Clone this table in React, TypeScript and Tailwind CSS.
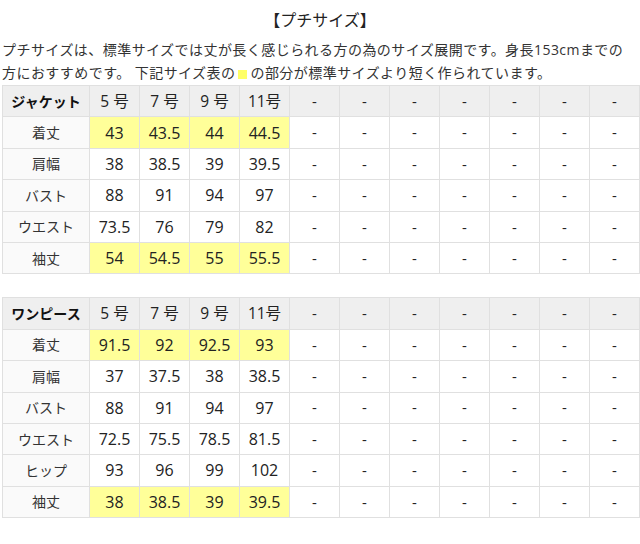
import React from "react";

const font = { fontFamily: '"Open Sans", "Noto Sans CJK JP", "Noto Sans", sans-serif' };

type Row = { label: string; vals: string[]; hl?: boolean };

const jacket: Row[] = [
  { label: "着丈", vals: ["43", "43.5", "44", "44.5"], hl: true },
  { label: "肩幅", vals: ["38", "38.5", "39", "39.5"] },
  { label: "バスト", vals: ["88", "91", "94", "97"] },
  { label: "ウエスト", vals: ["73.5", "76", "79", "82"] },
  { label: "袖丈", vals: ["54", "54.5", "55", "55.5"], hl: true },
];

const onepiece: Row[] = [
  { label: "着丈", vals: ["91.5", "92", "92.5", "93"], hl: true },
  { label: "肩幅", vals: ["37", "37.5", "38", "38.5"] },
  { label: "バスト", vals: ["88", "91", "94", "97"] },
  { label: "ウエスト", vals: ["72.5", "75.5", "78.5", "81.5"] },
  { label: "ヒップ", vals: ["93", "96", "99", "102"] },
  { label: "袖丈", vals: ["38", "38.5", "39", "39.5"], hl: true },
];

const sizes = ["5 号", "7 号", "9 号", "11号"];
const dashes = Array.from({ length: 7 }, () => "-");

function SizeTable({ title, rows }: { title: string; rows: Row[] }) {
  const cell = "border border-[#e0e0e0] h-[31.4px] p-0 text-center align-middle";
  return (
    <table className="ml-[2px] w-[635px] border-collapse table-fixed text-[15px] text-[#222]">
      <colgroup>
        <col className="w-[87px]" />
        {Array.from({ length: 11 }).map((_, i) => (
          <col key={i} className="w-[50px]" />
        ))}
      </colgroup>
      <tbody>
        <tr className="bg-[#efefef]">
          <td className={`${cell} font-bold text-[14px] text-[#111]`}>{title}</td>
          {sizes.map((s, i) => (
            <td key={i} className={`${cell} text-[15.5px]`}>{s}</td>
          ))}
          {dashes.map((d, i) => (
            <td key={i} className={cell}>{d}</td>
          ))}
        </tr>
        {rows.map((r, ri) => (
          <tr key={ri}>
            <td className={`${cell} bg-[#fafafa] text-[14px] text-[#333]`}>{r.label}</td>
            {r.vals.map((v, i) => (
              <td key={i} className={`${cell} text-[16px] ${r.hl ? "bg-[#ffff99]" : "bg-white"}`}>{v}</td>
            ))}
            {dashes.map((d, i) => (
              <td key={i} className={`${cell} bg-white`}>{d}</td>
            ))}
          </tr>
        ))}
      </tbody>
    </table>
  );
}

export default function App() {
  return (
    <div className="w-[640px] h-[544px] bg-white text-[#222]" style={font}>
      <div className="pt-[8px] mb-[6px] text-center text-[16px] leading-[24px]">【プチサイズ】</div>
      <div className="pl-[2px] text-[14px] leading-[23px] tracking-[0.45px] text-[#333]">
        <div className="whitespace-nowrap">プチサイズは、標準サイズでは丈が長く感じられる方の為のサイズ展開です。身長153cmまでの</div>
        <div className="whitespace-nowrap">
          方におすすめです。 下記サイズ表の
          <span className="inline-block w-[9px] h-[9px] bg-[#ffff66] mx-[3px] align-[-1px]"></span>
          の部分が標準サイズより短く作られています。
        </div>
      </div>
      <div className="mt-[1px]">
        <SizeTable title="ジャケット" rows={jacket} />
      </div>
      <div className="mt-[23px]">
        <SizeTable title="ワンピース" rows={onepiece} />
      </div>
    </div>
  );
}
